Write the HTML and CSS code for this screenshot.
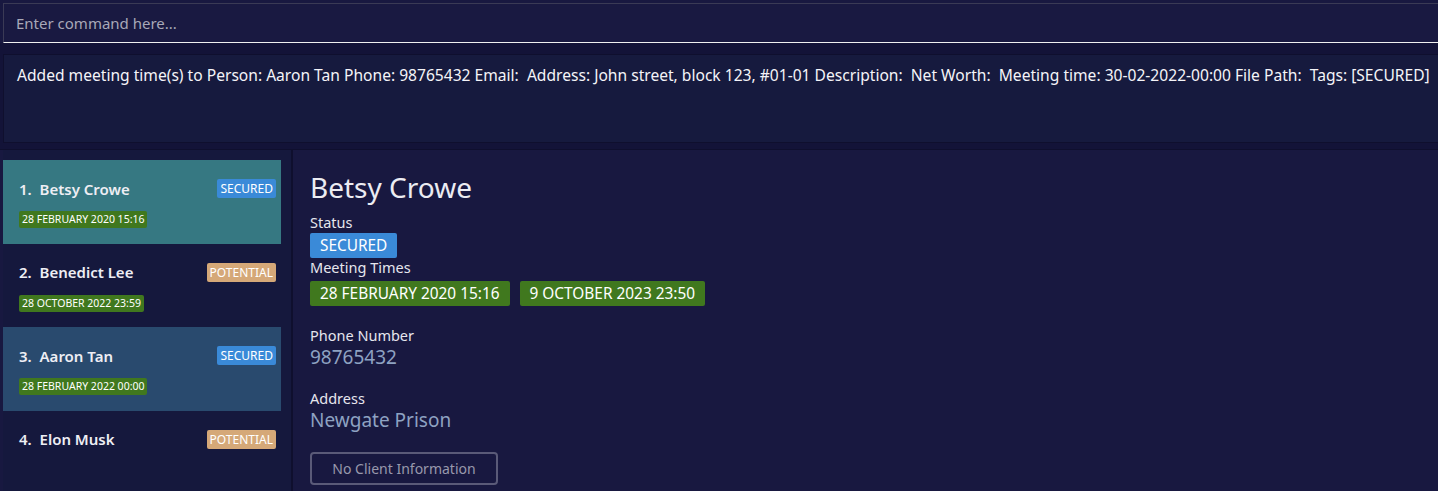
FILE: index.html
```html
<!DOCTYPE html>
<html>
<head>
<meta charset="utf-8">
<link rel="stylesheet" href="styles.css">
</head>
<body>
<div class="app">
  <div class="command-wrap">
    <div class="command">Enter command here...</div>
  </div>
  <div class="result-wrap">
    <div class="result">Added meeting time(s) to Person: Aaron Tan Phone: 98765432 Email:&nbsp; Address: John street, block 123, #01-01 Description:&nbsp; Net Worth:&nbsp; Meeting time: 30-02-2022-00:00 File Path:&nbsp; Tags: [SECURED]</div>
  </div>
  <div class="main">
    <div class="list">
      <div class="item sel-teal">
        <div class="item-top"><span class="name">1.&nbsp; Betsy Crowe</span><span class="tag secured">SECURED</span></div>
        <div class="dates"><span class="date">28 FEBRUARY 2020 15:16</span></div>
      </div>
      <div class="item">
        <div class="item-top"><span class="name">2.&nbsp; Benedict Lee</span><span class="tag potential">POTENTIAL</span></div>
        <div class="dates"><span class="date">28 OCTOBER 2022 23:59</span></div>
      </div>
      <div class="item sel-blue">
        <div class="item-top"><span class="name">3.&nbsp; Aaron Tan</span><span class="tag secured">SECURED</span></div>
        <div class="dates"><span class="date">28 FEBRUARY 2022 00:00</span></div>
      </div>
      <div class="item">
        <div class="item-top"><span class="name">4.&nbsp; Elon Musk</span><span class="tag potential">POTENTIAL</span></div>
      </div>
    </div>
    <div class="sep"></div>
    <div class="detail">
      <div class="d-name">Betsy Crowe</div>
      <div class="label">Status</div>
      <div class="row status-row"><span class="big-tag secured">SECURED</span></div>
      <div class="label">Meeting Times</div>
      <div class="row meet-row"><span class="big-tag date-g">28 FEBRUARY 2020 15:16</span><span class="big-tag date-g">9 OCTOBER 2023 23:50</span></div>
      <div class="field phone">
        <div class="label">Phone Number</div>
        <div class="value">98765432</div>
      </div>
      <div class="field addr">
        <div class="label">Address</div>
        <div class="value">Newgate Prison</div>
      </div>
      <div class="btn">No Client Information</div>
    </div>
  </div>
</div>
</body>
</html>
```
FILE: styles.css
```css
html, body {
  margin: 0;
  padding: 0;
  background: #181840;
  overflow: hidden;
}
body {
  font-family: "Noto Sans", "Open Sans", sans-serif;
  color: #ffffff;
  width: 1438px;
  height: 491px;
}
.app {
  display: flex;
  flex-direction: column;
  height: 491px;
}
.command-wrap {
  padding: 3px 0 0 3px;
  background: #181840;
}
.command {
  height: 40px;
  box-sizing: border-box;
  border-top: 1px solid #3a3a55;
  border-left: 1px solid #3a3a55;
  border-bottom: 1px solid #f0f0f0;
  background: #191941;
  color: #a8a8b8;
  font-size: 15px;
  line-height: 38px;
  padding-left: 12px;
}
.result-wrap {
  background: #131338;
  padding: 11px 0 6px 3px;
}
.result {
  height: 89px;
  box-sizing: border-box;
  border: 1px solid #0f0f2e;
  border-right: none;
  background: #161a3e;
  font-size: 15.6px;
  line-height: 20px;
  padding: 10px 0 0 13px;
  white-space: nowrap;
  color: #f4f4f8;
}
.main {
  flex: 1;
  display: flex;
  border-top: 1px solid #0f0f2e;
  min-height: 0;
}
.list {
  width: 288px;
  margin-left: 3px;
  background: #15183d;
  padding-top: 10px;
}
.sep {
  width: 2px;
  background: #0f0f2e;
}
.detail {
  flex: 1;
  background: #181840;
  padding: 19px 0 0 17px;
}
.item {
  width: 278px;
  height: 83.5px;
  box-sizing: border-box;
  padding: 18px 5px 0 16px;
}
.sel-teal { background: #367882; }
.sel-blue { background: #294a6e; }
.item-top {
  display: flex;
  justify-content: space-between;
  align-items: center;
  height: 21px;
}
.name {
  font-size: 15px;
  font-weight: 600;
  color: #eeeef4;
}
.tag {
  font-size: 12px;
  padding: 1px 3px;
  border-radius: 2px;
  color: #ffffff;
  line-height: 17px;
}
.secured { background: #3a8ad8; }
.potential { background: #d5a878; }
.dates { margin-top: 12px; display: flex; }
.date {
  font-size: 10.5px;
  background: #40781e;
  color: #ffffff;
  padding: 1px 3px;
  border-radius: 2px;
  line-height: 15px;
}
.d-name {
  font-size: 28px;
  color: #ececf2;
  line-height: 36px;
  margin-bottom: 8px;
}
.label {
  font-size: 14.5px;
  color: #e6e6ee;
  line-height: 18px;
}
.row {
  display: flex;
  gap: 10px;
}
.status-row { margin: 2px 0 0 0; }
.meet-row { margin-top: 5px; }
.big-tag {
  font-size: 15.4px;
  color: #ffffff;
  padding: 0 10px;
  line-height: 25px;
  border-radius: 2px;
}
.date-g { background: #40781e; }
.phone { margin-top: 20px; }
.addr { margin-top: 19px; }
.value {
  font-size: 19px;
  color: #8ea2c2;
  line-height: 26px;
}
.btn {
  margin-top: 19px;
  width: 188px;
  height: 33px;
  box-sizing: border-box;
  border: 2px solid #5a5a78;
  border-radius: 4px;
  color: #9898ac;
  font-size: 14px;
  line-height: 29px;
  text-align: center;
}
```
